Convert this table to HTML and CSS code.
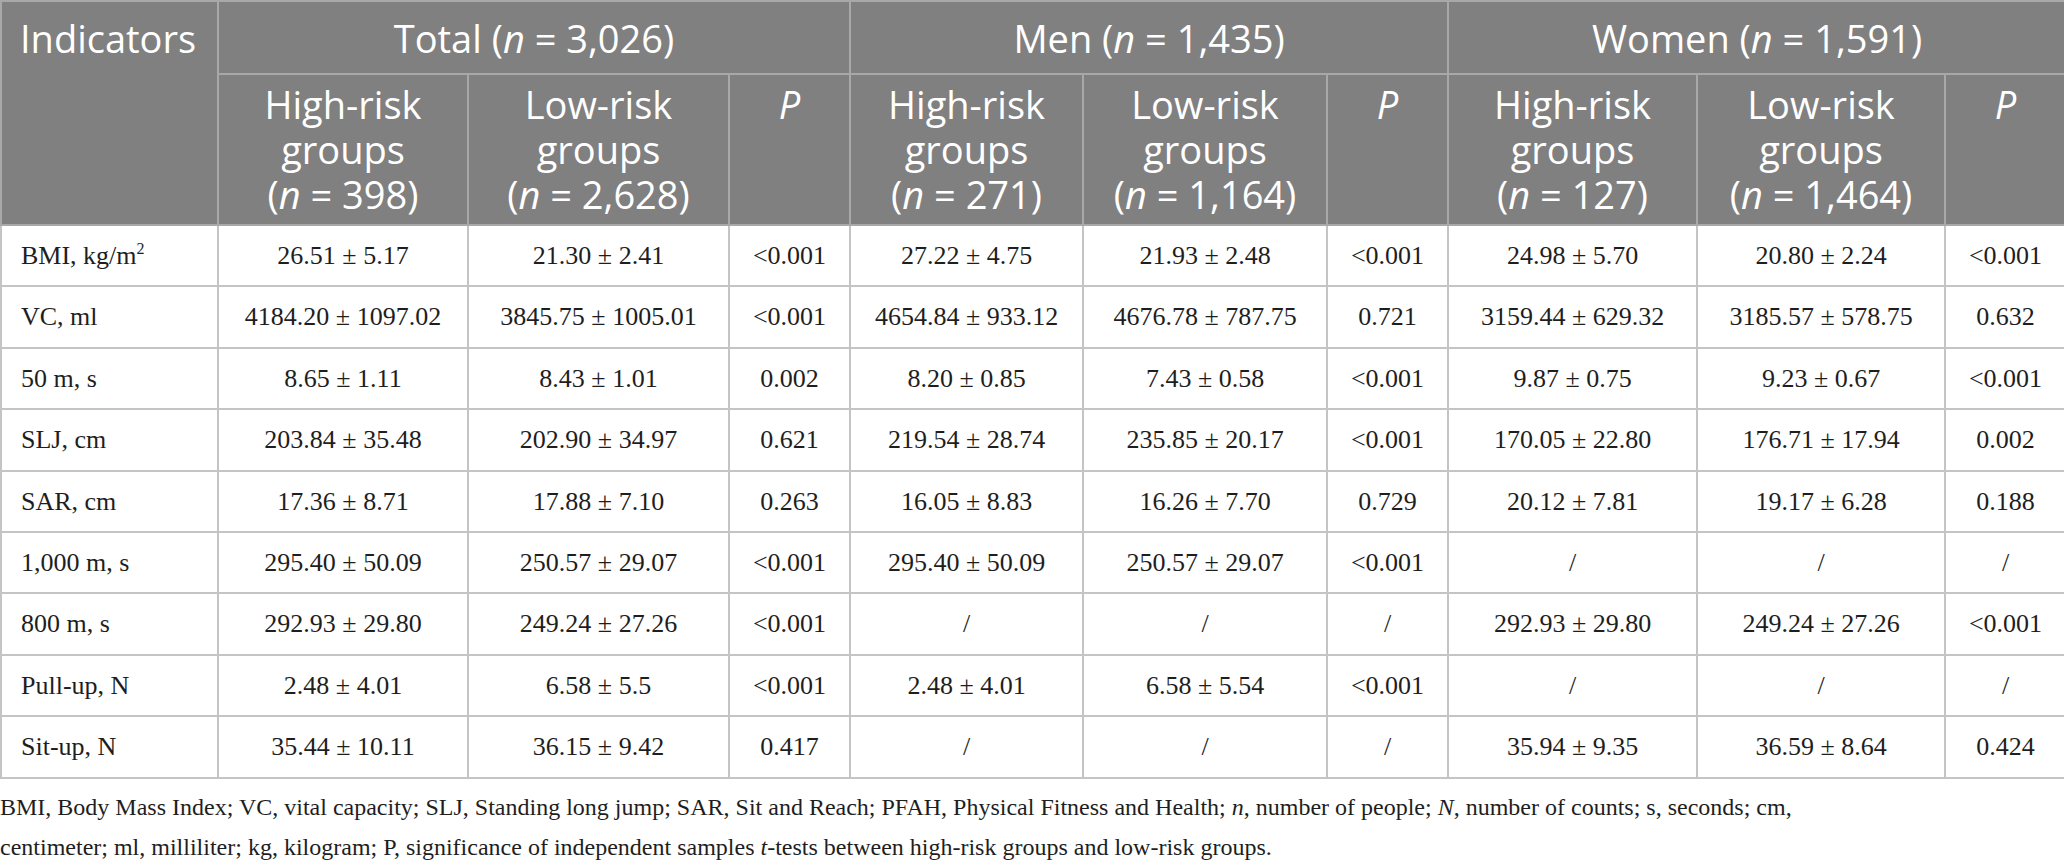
FILE: index.html
```html
<!DOCTYPE html>
<html lang="en">
<head>
<meta charset="utf-8">
<title>Indicators table</title>
<link rel="stylesheet" href="styles.css">
</head>
<body>
<table class="data">
  <colgroup>
    <col class="c-ind">
    <col class="c-t-hi"><col class="c-t-lo"><col class="c-p">
    <col class="c-m-hi"><col class="c-m-lo"><col class="c-p">
    <col class="c-w-hi"><col class="c-w-lo"><col class="c-p">
  </colgroup>
  <thead>
    <tr class="h1">
      <th rowspan="2" class="ind">Indicators</th>
      <th colspan="3">Total (<i>n</i> = 3,026)</th>
      <th colspan="3">Men (<i>n</i> = 1,435)</th>
      <th colspan="3">Women (<i>n</i> = 1,591)</th>
    </tr>
    <tr class="h2">
      <th>High-risk<br>groups<br>(<i>n</i> = 398)</th>
      <th>Low-risk<br>groups<br>(<i>n</i> = 2,628)</th>
      <th><i>P</i></th>
      <th>High-risk<br>groups<br>(<i>n</i> = 271)</th>
      <th>Low-risk<br>groups<br>(<i>n</i> = 1,164)</th>
      <th><i>P</i></th>
      <th>High-risk<br>groups<br>(<i>n</i> = 127)</th>
      <th>Low-risk<br>groups<br>(<i>n</i> = 1,464)</th>
      <th><i>P</i></th>
    </tr>
  </thead>
  <tbody>
    <tr><td>BMI, kg/m<sup>2</sup></td><td>26.51 ± 5.17</td><td>21.30 ± 2.41</td><td>&lt;0.001</td><td>27.22 ± 4.75</td><td>21.93 ± 2.48</td><td>&lt;0.001</td><td>24.98 ± 5.70</td><td>20.80 ± 2.24</td><td>&lt;0.001</td></tr>
    <tr><td>VC, ml</td><td>4184.20 ± 1097.02</td><td>3845.75 ± 1005.01</td><td>&lt;0.001</td><td>4654.84 ± 933.12</td><td>4676.78 ± 787.75</td><td>0.721</td><td>3159.44 ± 629.32</td><td>3185.57 ± 578.75</td><td>0.632</td></tr>
    <tr><td>50 m, s</td><td>8.65 ± 1.11</td><td>8.43 ± 1.01</td><td>0.002</td><td>8.20 ± 0.85</td><td>7.43 ± 0.58</td><td>&lt;0.001</td><td>9.87 ± 0.75</td><td>9.23 ± 0.67</td><td>&lt;0.001</td></tr>
    <tr><td>SLJ, cm</td><td>203.84 ± 35.48</td><td>202.90 ± 34.97</td><td>0.621</td><td>219.54 ± 28.74</td><td>235.85 ± 20.17</td><td>&lt;0.001</td><td>170.05 ± 22.80</td><td>176.71 ± 17.94</td><td>0.002</td></tr>
    <tr><td>SAR, cm</td><td>17.36 ± 8.71</td><td>17.88 ± 7.10</td><td>0.263</td><td>16.05 ± 8.83</td><td>16.26 ± 7.70</td><td>0.729</td><td>20.12 ± 7.81</td><td>19.17 ± 6.28</td><td>0.188</td></tr>
    <tr><td>1,000 m, s</td><td>295.40 ± 50.09</td><td>250.57 ± 29.07</td><td>&lt;0.001</td><td>295.40 ± 50.09</td><td>250.57 ± 29.07</td><td>&lt;0.001</td><td>/</td><td>/</td><td>/</td></tr>
    <tr><td>800 m, s</td><td>292.93 ± 29.80</td><td>249.24 ± 27.26</td><td>&lt;0.001</td><td>/</td><td>/</td><td>/</td><td>292.93 ± 29.80</td><td>249.24 ± 27.26</td><td>&lt;0.001</td></tr>
    <tr><td>Pull-up, N</td><td>2.48 ± 4.01</td><td>6.58 ± 5.5</td><td>&lt;0.001</td><td>2.48 ± 4.01</td><td>6.58 ± 5.54</td><td>&lt;0.001</td><td>/</td><td>/</td><td>/</td></tr>
    <tr><td>Sit-up, N</td><td>35.44 ± 10.11</td><td>36.15 ± 9.42</td><td>0.417</td><td>/</td><td>/</td><td>/</td><td>35.94 ± 9.35</td><td>36.59 ± 8.64</td><td>0.424</td></tr>
  </tbody>
</table>
<p class="note">BMI, Body Mass Index; VC, vital capacity; SLJ, Standing long jump; SAR, Sit and Reach; PFAH, Physical Fitness and Health; <i>n</i>, number of people; <i>N</i>, number of counts; s, seconds; cm,<br>centimeter; ml, milliliter; kg, kilogram; P, significance of independent samples <i>t</i>-tests between high-risk groups and low-risk groups.</p>
</body>
</html>
```

FILE: styles.css
```css
html, body {
  margin: 0;
  padding: 0;
  background: #ffffff;
}

.data {
  width: 2064px;
  border-collapse: collapse;
  table-layout: fixed;
  font-family: "Liberation Serif", "Times New Roman", serif;
  color: #1e1e1e;
}

.c-ind { width: 217px; }
.c-t-hi { width: 250px; }
.c-t-lo { width: 261px; }
.c-p { width: 121px; }
.c-m-hi { width: 233px; }
.c-m-lo { width: 244px; }
.c-w-hi { width: 249px; }
.c-w-lo { width: 248px; }

.data th {
  background: #808080;
  color: #ffffff;
  font-family: "Open Sans", "Noto Sans", sans-serif;
  font-weight: 400;
  font-size: 38px;
  line-height: 45px;
  text-align: center;
  vertical-align: top;
  border: 2px solid #a8a8a8;
  padding: 0 6px;
  white-space: nowrap;
}

.data th.ind {
  text-align: left;
  padding-left: 18px;
}

.h1 th {
  padding-top: 14px;
  padding-bottom: 12px;
}

.h2 th {
  padding-top: 7px;
  padding-bottom: 7px;
}

.data td {
  font-size: 26px;
  line-height: 30px;
  text-align: center;
  vertical-align: middle;
  border: 2px solid #c4c4c4;
  padding: 15px 6px 14.4px;
  white-space: nowrap;
}

.data td:first-child {
  text-align: left;
  padding-left: 19px;
}

.data sup {
  font-size: 16px;
  line-height: 0;
  vertical-align: 10px;
}

.note {
  margin: 8px 0 0;
  font-family: "Liberation Serif", "Times New Roman", serif;
  font-size: 24px;
  line-height: 40px;
  color: #1e1e1e;
}
```
